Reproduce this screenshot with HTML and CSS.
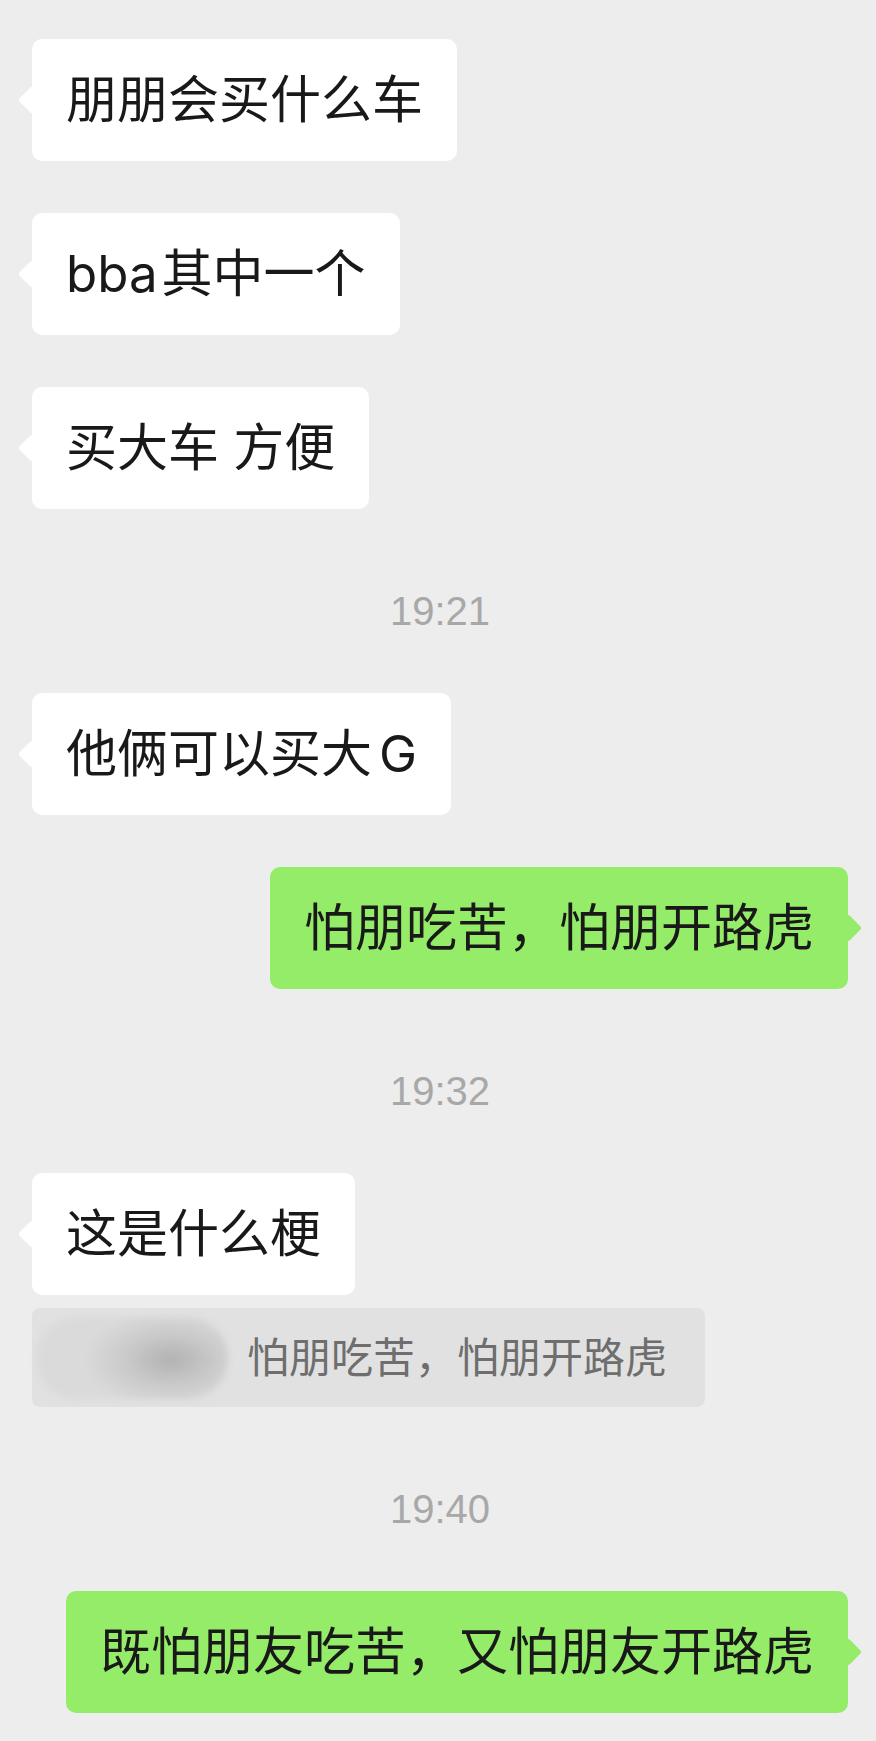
FILE: index.html
```html
<!DOCTYPE html>
<html lang="zh-CN">

<head>
    <meta charset="UTF-8">
    <meta name="viewport" content="width=device-width, initial-scale=1.0">
    <title>聊天记录</title>
    <link rel="stylesheet" href="styles.css">
</head>

<body>
    <div class="chat">
        <div class="row left">
            <div class="bubble">朋朋会买什么车</div>
        </div>
        <div class="row left">
            <div class="bubble"><span class="latin-r">bba</span>其中一个</div>
        </div>
        <div class="row left">
            <div class="bubble">买大车 方便</div>
        </div>

        <div class="time">19:21</div>

        <div class="row left">
            <div class="bubble">他俩可以买大<span class="latin-l">G</span></div>
        </div>
        <div class="row right">
            <div class="bubble green">怕朋吃苦，怕朋开路虎</div>
        </div>

        <div class="time">19:32</div>

        <div class="row left">
            <div class="bubble">这是什么梗</div>
        </div>
        <div class="row left quote-row">
            <div class="quote">
                <div class="quote-name"></div>
                <span class="quote-text">怕朋吃苦，怕朋开路虎</span>
            </div>
        </div>

        <div class="time">19:40</div>

        <div class="row right">
            <div class="bubble green">既怕朋友吃苦，又怕朋友开路虎</div>
        </div>
    </div>
</body>

</html>
```

FILE: styles.css
```css
body {
    margin: 0;
    padding: 0;
    background-color: #ededed;
    font-family: Inter, "Noto Sans CJK SC", sans-serif;
    color: #191919;
}

.chat {
    display: flex;
    flex-direction: column;
    padding: 39px 28px 40px 32px;
}

.row {
    display: flex;
    margin-bottom: 52px;
}

.row.left {
    justify-content: flex-start;
}

.row.right {
    justify-content: flex-end;
}

.bubble {
    position: relative;
    background-color: #ffffff;
    border-radius: 10px;
    padding: 30px 34px;
    font-size: 51px;
    line-height: 62px;
    white-space: nowrap;
}

.bubble::before {
    content: "";
    position: absolute;
    top: 50%;
    left: -10px;
    width: 20px;
    height: 20px;
    margin-top: -10px;
    background-color: inherit;
    border-radius: 3px;
    transform: rotate(45deg);
}

.bubble.green {
    background-color: #95ec69;
}

.bubble.green::before {
    left: auto;
    right: -10px;
}

/* small gap the phone puts between latin and chinese text */
.latin-r {
    margin-right: 4px;
}

.latin-l {
    margin-left: 7px;
}

/* reply line shown under a message */
.row.left:has(+ .quote-row) {
    margin-bottom: 13px;
}

.quote {
    display: flex;
    align-items: center;
    gap: 19px;
    height: 99px;
    padding: 0 38px 0 4px;
    background-color: #e1e1e1;
    border-radius: 8px;
}

.quote-name {
    width: 192px;
    height: 82px;
    border-radius: 40px;
    background: radial-gradient(ellipse 45% 60% at 70% 52%, #b2b2b2, #cbcbcb 55%, #dadada 100%);
    filter: blur(3px);
}

.quote-text {
    font-size: 42px;
    line-height: 50px;
    color: #6e6e6e;
}

.time {
    text-align: center;
    font-family: "Liberation Sans", Arial, sans-serif;
    font-size: 40px;
    line-height: 40px;
    color: #a8a8a8;
    margin-top: 30px;
    margin-bottom: 62px;
}
```
